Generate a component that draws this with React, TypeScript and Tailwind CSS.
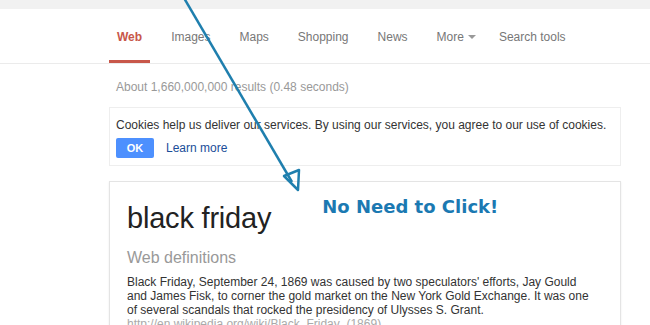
const tabs = ["Images", "Maps", "Shopping", "News"];

const App = () => {
  return (
    <main className="relative w-[650px] h-[325px] overflow-hidden bg-white font-['Liberation_Sans',Arial,sans-serif]">
      {/*TOP BAR*/}
      <div className="h-[9px] bg-[#f1f1f1]"></div>

      {/*TABS*/}
      <nav className="h-[55px] border-b border-[#ebebeb] pl-[109px] flex flex-row gap-[13px] text-[12px] text-[#777]">
        <div className="px-2 flex items-center border-b-[3px] border-[#c8574a] pt-[5px] font-bold text-[#c8574a]">
          Web
        </div>
        {tabs.map((t) => (
          <div key={t} className="px-2 flex items-center pt-[2px]">
            {t}
          </div>
        ))}
        <div className="px-2 flex items-center gap-[4px] pt-[2px]">
          More
          <span className="inline-block w-0 h-0 border-l-[4px] border-r-[4px] border-t-[4px] border-l-transparent border-r-transparent border-t-[#999]"></span>
        </div>
        <div className="pl-[2px] flex items-center pt-[2px]">Search tools</div>
      </nav>

      {/*CONTENT*/}
      <section className="w-[512px] ml-[109px] flex flex-col">
        <div className="pl-[7px] pt-[14px] h-[43px] text-[12px] text-[#999]">
          About 1,660,000,000 results (0.48 seconds)
        </div>

        <div className="border border-[#eeeeee] h-[59px] pl-[6px] pt-[10px] flex flex-col gap-[6px]">
          <p className="text-[12px] text-[#333] leading-[14px]">
            Cookies help us deliver our services. By using our services, you
            agree to our use of cookies.
          </p>
          <div className="flex flex-row items-center gap-[12px]">
            <span className="w-[38px] h-[20px] rounded-[2px] bg-[#4d90fe] text-white text-[11px] font-bold flex items-center justify-center">
              OK
            </span>
            <span className="text-[12px] text-[#1a4d99]">Learn more</span>
          </div>
        </div>

        <div className="mt-[15px] h-[200px] border border-[#e4e4e4] shadow-[0_1px_2px_rgba(0,0,0,0.08)] pl-[17px] pt-[18px]">
          <div className="flex flex-row items-start">
            <h1 className="text-[29px] leading-[36px] text-[#222] tracking-[-0.2px]">
              black friday
            </h1>
            <span className="ml-[51px] -mt-[7px] text-[18px] font-bold text-[#1b79b2] font-['DejaVu_Sans',Verdana,sans-serif]">
              No Need to Click!
            </span>
          </div>
          <div className="mt-[12px] text-[16px] text-[#999] font-light leading-[20px]">
            Web definitions
          </div>
          <p className="mt-[7px] whitespace-nowrap text-[12px] leading-[14px] text-[#333]">
            Black Friday, September 24, 1869 was caused by two speculators'
            efforts, Jay Gould
            <br />
            and James Fisk, to corner the gold market on the New York Gold
            Exchange. It was one
            <br />
            of several scandals that rocked the presidency of Ulysses S. Grant.
          </p>
          <div className="text-[12px] leading-[14px] text-[#aaa]">
            http://en.wikipedia.org/wiki/Black_Friday_(1869)
          </div>
        </div>
      </section>

      {/*ARROW*/}
      <svg
        className="absolute left-0 top-0 pointer-events-none"
        width="650"
        height="325"
        viewBox="0 0 650 325"
      >
        <line x1="184" y1="-2" x2="292" y2="182" stroke="#1f7fae" strokeWidth="2.5" />
        <polygon
          points="284,176 299,170 298,190"
          fill="none"
          stroke="#1f7fae"
          strokeWidth="2.5"
          strokeLinejoin="round"
        />
      </svg>
    </main>
  );
};

export default App;
